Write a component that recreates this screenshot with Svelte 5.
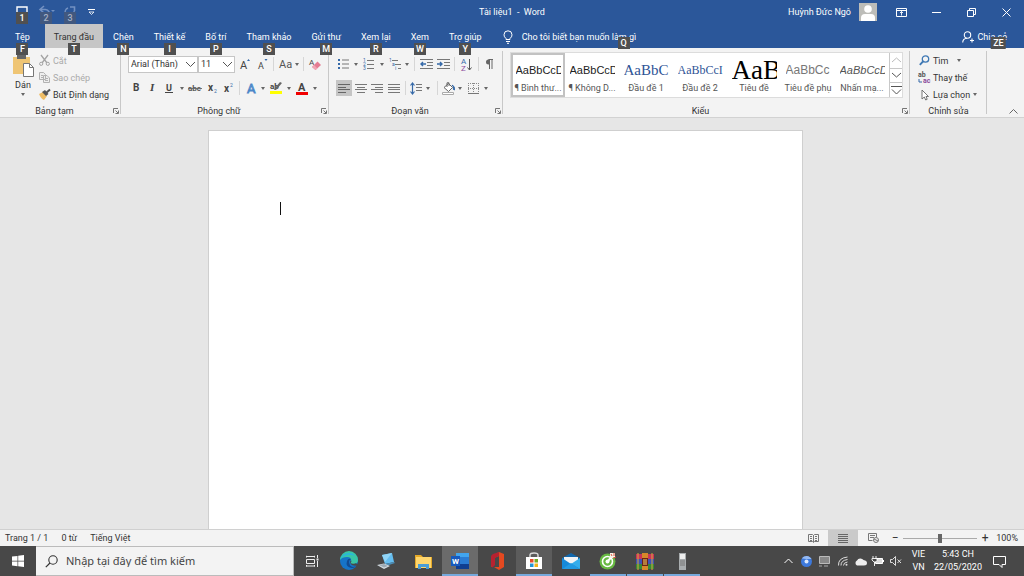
<script lang="ts">
	type Tab = { label: string; tip: string; active?: boolean };
	type Style = { sample: string; label: string; kind: string };
	type Tool = { icon?: string; label?: string; kind?: 'caret' | 'sep' | 'on' };

	let font = $state('Arial (Thân)');
	let size = $state('11');
	let zoom = $state(100);
	let query = $state('');

	const tabs: Tab[] = [
		{ label: 'Tệp', tip: 'F' },
		{ label: 'Trang đầu', tip: 'T', active: true },
		{ label: 'Chèn', tip: 'N' },
		{ label: 'Thiết kế', tip: 'I' },
		{ label: 'Bố trí', tip: 'P' },
		{ label: 'Tham khảo', tip: 'S' },
		{ label: 'Gửi thư', tip: 'M' },
		{ label: 'Xem lại', tip: 'R' },
		{ label: 'Xem', tip: 'W' },
		{ label: 'Trợ giúp', tip: 'Y' }
	];

	const styles: Style[] = [
		{ sample: 'AaBbCcD', label: '¶ Bình thư...', kind: 'body selected' },
		{ sample: 'AaBbCcD', label: '¶ Không D...', kind: 'body' },
		{ sample: 'AaBbC', label: 'Đầu đề 1', kind: 'heading' },
		{ sample: 'AaBbCcI', label: 'Đầu đề 2', kind: 'heading small' },
		{ sample: 'AaB', label: 'Tiêu đề', kind: 'title' },
		{ sample: 'AaBbCc', label: 'Tiêu đề phụ', kind: 'subtitle' },
		{ sample: 'AaBbCcD', label: 'Nhấn mạ...', kind: 'emphasis' }
	];

	const caret: Tool = { icon: 'caret', kind: 'caret', label: 'Tùy chọn' };
	const sep: Tool = { kind: 'sep' };

	const fontTools: Tool[] = [
		{ icon: 'bold', label: 'Đậm' },
		{ icon: 'italic', label: 'Nghiêng' },
		{ icon: 'underline', label: 'Gạch chân' },
		caret,
		{ icon: 'strike', label: 'Gạch ngang' },
		{ icon: 'sub', label: 'Chỉ số dưới' },
		{ icon: 'sup', label: 'Chỉ số trên' },
		sep,
		{ icon: 'effects', label: 'Hiệu ứng văn bản' },
		caret,
		{ icon: 'highlight', label: 'Màu tô sáng' },
		caret,
		{ icon: 'color', label: 'Màu phông' },
		caret
	];

	const listTools: Tool[] = [
		{ icon: 'bullets', label: 'Dấu đầu dòng' },
		caret,
		{ icon: 'numbers', label: 'Đánh số' },
		caret,
		{ icon: 'levels', label: 'Danh sách đa mức' },
		caret,
		sep,
		{ icon: 'outdent', label: 'Giảm thụt lề' },
		{ icon: 'indent', label: 'Tăng thụt lề' },
		sep,
		{ icon: 'sort', label: 'Sắp xếp' },
		sep,
		{ icon: 'pilcrow', label: 'Hiện dấu đoạn' }
	];

	const alignTools: Tool[] = [
		{ icon: 'left', label: 'Căn trái', kind: 'on' },
		{ icon: 'center', label: 'Căn giữa' },
		{ icon: 'right', label: 'Căn phải' },
		{ icon: 'justify', label: 'Căn đều' },
		sep,
		{ icon: 'spacing', label: 'Giãn cách dòng' },
		caret,
		sep,
		{ icon: 'bucket', label: 'Tô bóng' },
		caret,
		{ icon: 'borders', label: 'Viền' },
		caret
	];

	const apps = [
		{ icon: 'taskview', label: 'Dạng xem tác vụ', state: '' },
		{ icon: 'edge', label: 'Edge', state: '' },
		{ icon: 'laptop', label: 'PC', state: '' },
		{ icon: 'folder', label: 'File Explorer', state: '' },
		{ icon: 'word', label: 'Word', state: 'open focused' },
		{ icon: 'office', label: 'Office', state: '' },
		{ icon: 'store', label: 'Store', state: 'open hovered' },
		{ icon: 'mail', label: 'Thư', state: '' },
		{ icon: 'coccoc', label: 'Cốc Cốc', state: 'open' },
		{ icon: 'winrar', label: 'WinRAR', state: 'open' },
		{ icon: 'phone', label: 'Thiết bị', state: 'open' }
	];

	const tray = ['trayup', 'chrome', 'display', 'wifi', 'cloud', 'battery', 'mute'];

	// width, height, svg content
	const icons: Record<string, [number, number, string]> = {
		caret: [4, 3, '<path d="M0 0h4L2 3z" fill="#666"/>'],
		chevron: [11, 7, '<path d="M1 1l4.5 4.5L10 1" fill="none" stroke="#555"/>'],
		save: [12, 12, '<path d="M1 11V1h10v10" fill="none" stroke="#fff" stroke-width="1.4"/>'],
		undo: [14, 12, '<path d="M5 0L1 3.500l4 3.500M1 3.500h5a4 3.500 0 0 1 3 6" fill="none" stroke="#7391c2" stroke-width="1.6"/><path d="M12 4h4l-2 2z" fill="#7391c2"/>'],
		redo: [12, 12, '<path d="M10 5A4.500 4.500 0 1 1 4 2M6 1h4.500v4" fill="none" stroke="#7391c2" stroke-width="1.6"/>'],
		customize: [7, 6, '<path d="M0 .5h7" stroke="#fff"/><path d="M1 3h5L3.500 5.500z" fill="none" stroke="#fff" stroke-width=".8"/>'],
		avatar: [18, 18, '<path fill="#bdbdb9" d="M0 0h18v18H0z"/><circle cx="9" cy="6" r="3.800" fill="#fff"/><path d="M2 18v-3q0-4 4-4h6q4 0 4 4v3z" fill="#fff"/>'],
		ribbonopt: [11, 9, '<path d="M.5.5h10v8H.5zM.5 2.500h10" fill="none" stroke="#fff"/><path d="M5.500 7.500v-4M4 5l1.500-1.500L7 5" fill="none" stroke="#fff" stroke-width=".9"/>'],
		minimize: [9, 9, '<path d="M0 4.500h9" stroke="#fff"/>'],
		restore: [9, 9, '<path d="M.5 2.500h6v6h-6zM2.500 2.500v-2h6v6h-2" fill="none" stroke="#fff"/>'],
		close: [9, 9, '<path d="M.5.5l8 8M8.500.5l-8 8" stroke="#fff"/>'],
		bulb: [10, 14, '<path d="M3 9.500V8.500Q1 7 1 4.800a4 4 0 0 1 8 0Q9 7 7 8.500v1z" fill="none" stroke="#fff"/><path d="M3 11.500h4M4 13.300h2" stroke="#fff"/>'],
		share: [12, 12, '<circle cx="5.500" cy="4" r="3.200" fill="none" stroke="#fff" stroke-width="1.100"/><path d="M.7 11.500q.2-4 4.300-4.200M8 9.500h4M10 7.500v4" fill="none" stroke="#fff" stroke-width="1.100"/>'],
		paste: [22, 22, '<path d="M1 2h17v17H1z" fill="#efc574"/><path d="M5 0h9v4H5z" fill="#666"/><path d="M11.500 8.500h6l4 4v9h-10z" fill="#fff" stroke="#777"/><path d="M17.500 8.500v4h4" fill="none" stroke="#777"/>'],
		cut: [11, 11, '<path d="M2 0l6 8M9 0L3 8" stroke="#a5a5a5" stroke-width="1.300"/><circle cx="2.200" cy="8.800" r="1.600" fill="none" stroke="#a5a5a5"/><circle cx="8.800" cy="8.800" r="1.600" fill="none" stroke="#a5a5a5"/>'],
		copy: [11, 11, '<path d="M.5.5h4l2 2v5h-6zM4.500 3.500h3.500l2.500 2.500v4.500h-6z" fill="#eee" stroke="#b2b2b2"/><path d="M2 3.500h2M2 5.500h2M6 6.500h3M6 8.500h3" stroke="#b2b2b2"/>'],
		brush: [11, 11, '<path d="M0 5l4-2 4 4-3 4q-3-1-5-6z" fill="#efbd65"/><path d="M3 3l3-2L9.500 5 7 7z" fill="#555"/><path d="M7 4l4-3.500" stroke="#555" stroke-width="2"/>'],
		launcher: [6, 6, '<path d="M.5 5V.5H5M2.500 2.500L5 5M5.500 2.500v3h-3" fill="none" stroke="#666" stroke-width=".9"/>'],
		grow: [10, 12, '<text x="0" y="11" font-size="11" fill="#444">A</text><path d="M7 3l1.500-2L10 3z" fill="#3569a8"/>'],
		shrink: [10, 12, '<text x="0" y="11" font-size="9" fill="#444">A</text><path d="M6.500 1h3L8 3z" fill="#3569a8"/>'],
		case: [13, 12, '<text x="0" y="10" font-size="11" fill="#555">Aa</text>'],
		clear: [13, 13, '<text x="0" y="7" font-size="8" fill="#444">A</text><path d="M3 9l5.500-5.500L12 7l-5.500 5z" fill="#e57b92"/><path d="M3 9l2-2 3.500 3.500L6.500 12z" fill="#efa5b4"/>'],
		bold: [8, 12, '<text x="1" y="9" font-size="10" font-weight="700" fill="#444">B</text>'],
		italic: [8, 12, '<text x="2" y="9" font-size="11" font-style="italic" font-family="Liberation Serif" font-weight="700" fill="#444">I</text>'],
		underline: [8, 12, '<text x="1" y="9" font-size="9" font-weight="700" fill="#444">U</text><path d="M0 10.500h8" stroke="#444"/>'],
		strike: [14, 12, '<text x="0" y="9" font-size="8" font-weight="700" fill="#555">abc</text><path d="M0 6.500h14" stroke="#666" stroke-width=".9"/>'],
		sub: [11, 12, '<text x="1" y="9" font-size="10" font-weight="700" fill="#444">x</text><text x="7" y="11" font-size="5" fill="#3569a8">2</text>'],
		sup: [11, 12, '<text x="1" y="10" font-size="10" font-weight="700" fill="#444">x</text><text x="7" y="5" font-size="5" fill="#3569a8">2</text>'],
		effects: [11, 12, '<text x="1" y="11" font-size="13" fill="#fff" stroke="#4b86c8" stroke-width=".9">A</text>'],
		highlight: [13, 13, '<text x="0" y="7" font-size="8" font-weight="700" fill="#444">ab</text><path d="M12 1L6 8H4l1-2 5-6z" fill="#666"/><path d="M0 9h12v3H0z" fill="#ffff00"/>'],
		color: [12, 13, '<text x="2" y="9" font-size="11" font-weight="700" fill="#444">A</text><path d="M0 10h12v3H0z" fill="#f00000"/>'],
		bullets: [12, 12, '<path d="M0 1h2v2H0zM0 5h2v2H0zM0 9h2v2H0z" fill="#3569a8"/><path d="M4 2h7M4 6h7M4 10h7" stroke="#777"/>'],
		numbers: [12, 13, '<g font-size="5" fill="#3569a8"><text x="0" y="4">1</text><text x="0" y="8">2</text><text x="0" y="12">3</text></g><path d="M4 2.500h7M4 6.500h7M4 10.500h7" stroke="#777"/>'],
		levels: [13, 13, '<g font-size="5" fill="#3569a8"><text x="0" y="4">1</text><text x="3" y="8">a</text><text x="6" y="12">i</text></g><path d="M3 2.500h6M6 6.500h6M9 10.500h3" stroke="#777"/>'],
		outdent: [13, 11, '<path d="M0 .5h13M7 3.500h6M7 6.500h6M0 9.500h13" stroke="#777"/><path d="M6 5H1M3 3L1 5l2 2" fill="none" stroke="#3569a8" stroke-width="1.400"/>'],
		indent: [13, 11, '<path d="M0 .5h13M7 3.500h6M7 6.500h6M0 9.500h13" stroke="#777"/><path d="M0 5h5M3 3l2 2-2 2" fill="none" stroke="#3569a8" stroke-width="1.400"/>'],
		sort: [11, 13, '<text x="0" y="6" font-size="8" fill="#3569a8">A</text><text x="0" y="13" font-size="8" fill="#8b4b9c">Z</text><path d="M8.500 1v11M6.500 9.500l2 2.500 2-2.500" fill="none" stroke="#555"/>'],
		pilcrow: [9, 12, '<path d="M4 1.500H3.500a2.500 2.500 0 0 0 0 5H4z" fill="#666"/><path d="M8 1.500H3.500M4.500 1v10M7 1v10" fill="none" stroke="#666"/>'],
		left: [12, 9, '<path d="M0 .5h12M0 3.500h8M0 5.500h12M0 8.500h8" stroke="#666"/>'],
		center: [12, 9, '<path d="M0 .5h12M2 3.500h8M0 5.500h12M2 8.500h8" stroke="#777"/>'],
		right: [12, 9, '<path d="M0 .5h12M4 3.500h8M0 5.500h12M4 8.500h8" stroke="#777"/>'],
		justify: [12, 9, '<path d="M0 .5h12M0 3.500h12M0 5.500h12M0 8.500h12" stroke="#777"/>'],
		spacing: [12, 13, '<path d="M2.500 1v11M.5 3.500l2-2.500 2 2.500M.5 9.500l2 2.500 2-2.500" fill="none" stroke="#3569a8" stroke-width="1.200"/><path d="M6 2.500h6M6 5.500h6M6 8.500h6" stroke="#777"/>'],
		bucket: [14, 13, '<path d="M2 5.500L6.500 1.500l4 4-4 4z" fill="#fff" stroke="#666"/><path d="M5 5V.8h2V4" fill="none" stroke="#666"/><path d="M10 3q3 1 2.500 5-2 0-1-3z" fill="#3569a8" stroke="#3569a8"/><path d="M.5 10.500h11v2H.5z" fill="#fff" stroke="#aaa"/>'],
		borders: [11, 11, '<path d="M.5 0v11M5.500 0v11M10.500 0v11M0 .5h11M0 5.500h11" stroke="#888" stroke-dasharray="1 1"/><path d="M0 10.500h11" stroke="#777"/>'],
		find: [11, 11, '<circle cx="6.500" cy="4" r="3.200" fill="none" stroke="#3e78b4" stroke-width="1.300"/><path d="M4 6.500L.8 9.800" stroke="#3e78b4" stroke-width="1.800"/>'],
		replace: [11, 12, '<text x="-1" y="5" font-size="7" font-weight="700" fill="#555">ab</text><text x="4" y="11" font-size="7" font-weight="700" fill="#8b4b9c">ac</text><path d="M0 7v3h3" fill="none" stroke="#3569a8"/>'],
		pointer: [11, 12, '<path d="M3 1v9l2.300-2 1.400 3 1.500-.7L7 7.500h2.500z" fill="#fff" stroke="#666" stroke-width=".9"/>'],
		collapse: [9, 5, '<path d="M.5 4.500l4-4 4 4" fill="none" stroke="#666"/>'],
		scrollup: [11, 6, '<path d="M1 5l4.500-4L10 5" fill="none" stroke="#bbb"/>'],
		scrolldown: [11, 6, '<path d="M1 1l4.500 4L10 1" fill="none" stroke="#555"/>'],
		scrollmore: [11, 9, '<path d="M0 .5h11M1 3.500l4.500 4.500L10 3.500" fill="none" stroke="#555"/>'],
		readmode: [11, 9, '<path d="M.5.5h4l1 1 1-1h4v7h-4l-1 1-1-1h-4zM5.500 1v7M2 2.500h2M2 4.500h2M2 6.500h2M7 2.500h2M7 4.500h2M7 6.500h2" fill="none" stroke="#777"/>'],
		printview: [10, 9, '<path d="M0 .5h10M0 2.500h10M0 4.500h10M0 6.500h10M0 8.500h10" stroke="#666"/>'],
		webview: [11, 10, '<path d="M8.500 4V.5h-8v7h4M2 2.500h5M2 4.500h4" fill="none" stroke="#777"/><circle cx="8" cy="7" r="2.500" fill="#eee" stroke="#777"/><path d="M6 6l4 2" stroke="#777"/>'],
		windows: [12, 12, '<path d="M0 1.600L5.500.9v4.800H0zM6.200.8L12 0v5.700H6.200zM0 6.400h5.500v4.800L0 10.400zM6.200 6.400H12V12l-5.800-.8z" fill="#fff"/>'],
		search: [13, 13, '<circle cx="8" cy="5" r="4.200" fill="none" stroke="#333" stroke-width="1.100"/><path d="M5 8L.8 12.200" stroke="#333" stroke-width="1.200"/>'],
		taskview: [13, 12, '<path d="M.5 2.500V.8M.5 1.500h8M8.500.8v1.700M.5 4.500h8v4h-8zM.5 10v1.700M.5 11h8M8.500 10v1.700M11.500 0v3M11.500 6v6" fill="none" stroke="#eee"/><path d="M10.500 3.500h2v2h-2z" fill="#eee"/>'],
		edge: [18, 18, '<circle cx="9" cy="9" r="9" fill="#1674c8"/><path d="M0 8A9 9 0 0 1 18 8q0 4-4.500 4-4 0-2.500-2Q12 5 7 5 2 5 0 8z" fill="#39c6a6"/><path d="M0 8Q2 1 9 1q4 0 6 3-4-2-8-1-5 1-7 5z" fill="#28b5df"/><path d="M7 9q-2 6 5 7 3 0 4-2-6 3-7-4 0-2 2-3-3-1-4 2z" fill="#124b91"/><path d="M11 8q1 2-.5 3 2 1.500 5 .3l2.500 1-1 1.500q-6 .5-7-3.500z" fill="#484848"/>'],
		laptop: [18, 16, '<path d="M5 2l10-2 2 9-9 2z" fill="#64bdf0"/><path d="M5 2l10-2-7 9z" fill="#91d5f7"/><path d="M8 11l9-2 1 1-9 3z" fill="#4b8fba"/><path d="M0 12l7-1.500 6 2.500-6 3z" fill="#d4dce1"/><path d="M2 12l5-1 4 2-4 1.500z" fill="#9ca9b3"/>'],
		folder: [17, 15, '<path d="M0 1h6l2 2h9v11H0z" fill="#e5a928"/><path d="M1 3h15v11H1z" fill="#ffd66d"/><path d="M3 15v-5h11v5h-3v-2H6v2z" fill="#4b9dd6"/>'],
		word: [18, 16, '<path d="M5 0h12q1 0 1 1v14q0 1-1 1H5z" fill="#2b7cd3"/><path d="M5 0h13v4H5z" fill="#41a5ee"/><path d="M5 11h13v5H5z" fill="#103f91"/><path d="M0 3h9v10H0z" fill="#185abd"/><text x="1" y="11" font-size="8" font-weight="700" fill="#fff">W</text>'],
		office: [15, 18, '<path d="M9 0l5 2v13l-5 3-5-3 5 0V4L5 5.500V12l-4 3V5z" fill="#e44920"/><path d="M9 0L3 2Q1 3 1 5v8q0 2 1.500 2.500L5 13V6l4-2z" fill="#b72230"/>'],
		store: [18, 18, '<path d="M5 5V3q0-2 4-2t4 2v2" fill="none" stroke="#ddd" stroke-width="1.400"/><path d="M1 5h16v12H1z" fill="#fff"/><path d="M5 7h3.500v3.500H5z" fill="#e64b2a"/><path d="M9.500 7H13v3.500H9.500z" fill="#72ab25"/><path d="M5 11.500h3.500V15H5z" fill="#2195d4"/><path d="M9.500 11.500H13V15H9.500z" fill="#f4b41a"/>'],
		mail: [18, 16, '<path d="M0 5l9-5 9 5v11H0z" fill="#1268ad"/><path d="M2 4h14v7H2z" fill="#f1f3f5"/><path d="M0 5l9 6-9 5z" fill="#1689d8"/><path d="M18 5l-9 6 9 5z" fill="#35adeb"/><path d="M0 16l9-6 9 6z" fill="#2299e2"/>'],
		coccoc: [18, 18, '<circle cx="8.500" cy="9.500" r="8" fill="#68b943"/><circle cx="8.500" cy="9.500" r="5" fill="none" stroke="#fff" stroke-width="1.600"/><circle cx="8.500" cy="9.500" r="2" fill="#fff"/><path d="M9 9l6-7" stroke="#fff" stroke-width="2"/><path d="M11 1h5v5h-5z" fill="#f4f4e8"/><path d="M12 2l1 2M15 1v3M14 6l3-1" stroke="#dd513f"/>'],
		winrar: [18, 17, '<path d="M0 1h18v5H0z" fill="#c93558"/><path d="M0 6h18v5H0z" fill="#3e52b5"/><path d="M0 11h18v5H0z" fill="#378a37"/><path d="M2 0v17M16 0v17" stroke="#d7aa3e"/><path d="M6 0h6v17H6z" fill="#d68829"/><path d="M6 5h6v8H6z" fill="#6b2418"/><path d="M7 7h4M7 9h4M7 11h4" stroke="#ffd763"/>'],
		phone: [9, 17, '<path d="M1 0h7v17H1z" fill="#a9adaf"/><path d="M2 1h5v5H2z" fill="#eee"/><path d="M2 8h5M2 10h5M2 12h5" stroke="#777"/>'],
		trayup: [9, 6, '<path d="M.5 5l4-4 4 4" fill="none" stroke="#fff"/>'],
		chrome: [11, 11, '<circle cx="5.500" cy="5.500" r="5.500" fill="#3d79dc"/><path d="M1 2.500A5.500 5.500 0 0 1 10.500 3h-5z" fill="#96baf2"/><circle cx="5.500" cy="5.500" r="2" fill="#dce9fb"/>'],
		display: [12, 11, '<path d="M1.500.5h10v7h-10z" fill="#888" stroke="#bbb"/><path d="M1 10h3M6 10h4" stroke="#aaa"/>'],
		wifi: [11, 10, '<path d="M1.500 9.500Q1 2 10.500 1M4 9.500Q3.800 4.500 10.500 3.500M6.500 9.500q0-3 4-3.500" fill="none" stroke="#ddd"/><circle cx="9.500" cy="8.800" r="1" fill="#ddd"/>'],
		cloud: [13, 9, '<path d="M3 8.500a2.800 2.800 0 0 1 0-5A3.800 3.800 0 0 1 9.500 3q3.500.5 3.500 3t-3 2.500z" fill="#eee"/>'],
		battery: [12, 10, '<path d="M3.500 2.500h7v5h-7z" fill="#ddd" stroke="#fff"/><path d="M11 4h1v2h-1z" fill="#fff"/><path d="M1 0v2M4 0v2M0 2.500h5v2L3.500 6H2L0 4zM2.500 6v4" fill="#484848" stroke="#fff" stroke-width=".9"/>'],
		mute: [12, 10, '<path d="M.5 3.500h2l3-3v9l-3-3h-2zM7.500 3.500l3.500 3.500M11 3.500L7.500 7" fill="none" stroke="#eee" stroke-width=".9"/>'],
		notice: [13, 13, '<path d="M.5 1.500h12v8H9v3L6 9.500H.5z" fill="none" stroke="#fff"/>']
	};
</script>

{#snippet icon(name: string)}
	{@const [w, h, body] = icons[name]}
	<svg class="icon" width={w} height={h} viewBox="0 0 {w} {h}" aria-hidden="true">{@html body}</svg>
{/snippet}

{#snippet tool(t: Tool)}
	{#if t.kind === 'sep'}
		<span class="sep"></span>
	{:else}
		<button class="tool" class:on={t.kind === 'on'} type="button" aria-label={t.label}>
			{@render icon(t.icon ?? '')}
		</button>
	{/if}
{/snippet}

{#snippet caption(text: string, launcher: boolean)}
	<div class="caption" class:has-launcher={launcher}>
		<span>{text}</span>
		{#if launcher}
			<button class="launcher" type="button" aria-label="Cài đặt {text}">{@render icon('launcher')}</button>
		{/if}
	</div>
{/snippet}

<div class="app">
	<header class="titlebar">
		<div class="quick">
			<button type="button" aria-label="Lưu">{@render icon('save')}<span class="tip">1</span></button>
			<button type="button" aria-label="Hoàn tác">
				{@render icon('undo')}<span class="tip faded">2</span>
			</button>
			<button type="button" aria-label="Làm lại">
				{@render icon('redo')}<span class="tip faded">3</span>
			</button>
			<button class="narrow" type="button" aria-label="Tùy chỉnh">{@render icon('customize')}</button>
		</div>
		<div class="doc-title">Tài liệu1&nbsp; -&nbsp; Word</div>
		<div class="window-tools">
			<button class="user" type="button">Huỳnh Đức Ngô {@render icon('avatar')}</button>
			<button class="win" type="button" aria-label="Tùy chọn dải băng">{@render icon('ribbonopt')}</button>
			<button class="win" type="button" aria-label="Thu nhỏ">{@render icon('minimize')}</button>
			<button class="win" type="button" aria-label="Khôi phục">{@render icon('restore')}</button>
			<button class="win" type="button" aria-label="Đóng">{@render icon('close')}</button>
		</div>
	</header>

	<nav class="tabs">
		{#each tabs as tab}
			<button class="tab" class:active={tab.active} type="button">
				{tab.label}<span class="tip">{tab.tip}</span>
			</button>
		{/each}
		<button class="tell" type="button">
			{@render icon('bulb')}
			<span>Cho tôi biết bạn muốn làm gì</span>
			<span class="tip">Q</span>
		</button>
		<button class="share" type="button">
			{@render icon('share')} Chia sẻ<span class="tip">ZE</span>
		</button>
	</nav>

	<section class="ribbon">
		<div class="group">
			<div class="clipboard">
				<button class="paste" type="button">
					{@render icon('paste')}<span>Dán</span>{@render icon('caret')}
				</button>
				<div class="stack">
					<button type="button" disabled>{@render icon('cut')} Cắt</button>
					<button type="button" disabled>{@render icon('copy')} Sao chép</button>
					<button type="button">{@render icon('brush')} Bút Định dạng</button>
				</div>
			</div>
			{@render caption('Bảng tạm', true)}
		</div>

		<div class="group">
			<div class="row font-row">
				<label class="combo">
					<select bind:value={font} aria-label="Phông"><option>Arial (Thân)</option></select>
					{@render icon('chevron')}
				</label>
				<label class="combo">
					<select bind:value={size} aria-label="Cỡ phông"><option>11</option></select>
					{@render icon('chevron')}
				</label>
				{@render tool({ icon: 'grow', label: 'Tăng cỡ phông' })}
				{@render tool({ icon: 'shrink', label: 'Giảm cỡ phông' })}
				{@render tool(sep)}
				{@render tool({ icon: 'case', label: 'Đổi kiểu chữ' })}
				{@render tool(caret)}
				{@render tool(sep)}
				{@render tool({ icon: 'clear', label: 'Xóa định dạng' })}
			</div>
			<div class="row format-row">
				{#each fontTools as t}{@render tool(t)}{/each}
			</div>
			{@render caption('Phông chữ', true)}
		</div>

		<div class="group">
			<div class="row list-row">
				{#each listTools as t}{@render tool(t)}{/each}
			</div>
			<div class="row align-row">
				{#each alignTools as t}{@render tool(t)}{/each}
			</div>
			{@render caption('Đoạn văn', true)}
		</div>

		<div class="group">
			<div class="gallery">
				{#each styles as s}
					<button class="style {s.kind}" type="button">
						<span class="sample">{s.sample}</span>
						<span class="style-name">{s.label}</span>
					</button>
				{/each}
				<div class="scroller">
					<button type="button" aria-label="Lên">{@render icon('scrollup')}</button>
					<button type="button" aria-label="Xuống">{@render icon('scrolldown')}</button>
					<button type="button" aria-label="Thêm">{@render icon('scrollmore')}</button>
				</div>
			</div>
			{@render caption('Kiểu', true)}
		</div>

		<div class="group">
			<div class="stack editing">
				<button type="button">{@render icon('find')} Tìm <span class="gap"></span>{@render icon('caret')}</button>
				<button type="button">{@render icon('replace')} Thay thế</button>
				<button type="button">{@render icon('pointer')} Lựa chọn{@render icon('caret')}</button>
			</div>
			{@render caption('Chỉnh sửa', false)}
		</div>

		<button class="collapse" type="button" aria-label="Thu gọn dải băng">{@render icon('collapse')}</button>
	</section>

	<main class="workspace">
		<article class="page"><span class="text-caret"></span></article>
	</main>

	<footer class="status">
		<span>Trang 1 / 1</span>
		<span>0 từ</span>
		<span>Tiếng Việt</span>
		<div class="views">
			<button type="button" aria-label="Chế độ đọc">{@render icon('readmode')}</button>
			<button class="current" type="button" aria-label="Bố trí in">{@render icon('printview')}</button>
			<button type="button" aria-label="Bố trí web">{@render icon('webview')}</button>
		</div>
		<div class="zoom">
			<button type="button" aria-label="Thu nhỏ">−</button>
			<input type="range" min="0" max="200" bind:value={zoom} aria-label="Thu phóng" />
			<button type="button" aria-label="Phóng to">+</button>
			<span class="percent">{zoom}%</span>
		</div>
	</footer>

	<div class="taskbar">
		<button class="start" type="button" aria-label="Bắt đầu">{@render icon('windows')}</button>
		<label class="search">
			{@render icon('search')}
			<input type="text" placeholder="Nhập tại đây để tìm kiếm" aria-label="Tìm kiếm" bind:value={query} />
		</label>
		<div class="apps">
			{#each apps as app}
				<button class="app-button {app.state}" type="button" aria-label={app.label}>
					{@render icon(app.icon)}
				</button>
			{/each}
		</div>
		<div class="tray">
			{#each tray as name}
				<button type="button" aria-label={name}>{@render icon(name)}</button>
			{/each}
		</div>
		<div class="language">VIE<br />VN</div>
		<div class="clock">5:43 CH<br />22/05/2020</div>
		<button class="notice" type="button" aria-label="Thông báo">{@render icon('notice')}</button>
	</div>
</div>

<style>
	:global(body) {
		background: #e6e6e6;
	}

	.app,
	.app * {
		box-sizing: border-box;
	}

	.app {
		display: flex;
		flex-direction: column;
		min-height: 100vh;
		font-family: Roboto, 'Noto Sans', sans-serif;
		font-size: 9px;
		line-height: 12px;
		color: #333;
	}

	button,
	select,
	input {
		margin: 0;
		padding: 0;
		border: 0;
		border-radius: 0;
		background: transparent;
		color: inherit;
		font: inherit;
	}

	button {
		display: flex;
		align-items: center;
		justify-content: center;
		white-space: nowrap;
	}

	.icon {
		display: block;
		flex: none;
		overflow: visible;
	}

	.titlebar {
		display: grid;
		grid-template-columns: 1fr auto 1fr;
		align-items: center;
		height: 24px;
		background: #2b579a;
		color: #fff;
	}

	.quick {
		display: flex;
		padding-left: 10px;
	}

	.quick button {
		position: relative;
		width: 24px;
		height: 24px;
	}

	.quick .narrow {
		width: 18px;
	}

	.tip {
		position: absolute;
		bottom: -7px;
		left: 50%;
		z-index: 1;
		min-width: 12px;
		height: 12px;
		padding: 0 2px;
		transform: translateX(-50%);
		background: #505050;
		color: #fff;
		font-size: 9px;
		font-weight: 500;
		line-height: 12px;
		text-align: center;
	}

	.quick .tip {
		bottom: 0;
	}

	.tip.faded {
		background: #41587f;
		color: #a5b0c4;
	}

	.window-tools {
		display: flex;
		justify-content: flex-end;
		align-items: center;
	}

	.user {
		gap: 8px;
		margin-right: 7px;
	}

	.win {
		width: 35px;
		height: 24px;
	}

	.tabs {
		display: flex;
		height: 24px;
		background: #2b579a;
		color: #fff;
	}

	.tab {
		position: relative;
		padding: 2px 10px 0;
	}

	.tab:first-child {
		padding: 2px 15px 0;
	}

	.tab.active {
		padding: 2px 9px 0;
		background: #c6c6c6;
		color: #333;
	}

	.tell,
	.share {
		position: relative;
		gap: 9px;
		margin-left: 11px;
		padding-top: 2px;
	}

	.tell .tip {
		bottom: -1px;
		left: 121px;
	}

	.share {
		gap: 3px;
		margin-left: auto;
		margin-right: 17px;
	}

	.share .tip {
		bottom: -1px;
		left: 36px;
	}

	.ribbon {
		display: grid;
		grid-template-columns: 121px 208px 174px minmax(0, 1fr) 77px 37px;
		height: 70px;
		border-bottom: 1px solid #d2d2d2;
		background: #f3f3f3;
	}

	.group {
		position: relative;
		display: flex;
		flex-direction: column;
		min-width: 0;
		padding: 4px 7px 0;
	}

	.group::after {
		content: '';
		position: absolute;
		top: 3px;
		right: 0;
		bottom: 3px;
		width: 1px;
		background: #c8c8c8;
	}

	.caption {
		display: flex;
		justify-content: center;
		position: relative;
		height: 12px;
		margin-top: auto;
	}

	.has-launcher {
		padding-right: 12px;
	}

	.launcher {
		position: absolute;
		top: 3px;
		right: -5px;
	}

	.clipboard {
		display: flex;
		height: 52px;
	}

	.paste {
		flex-direction: column;
		gap: 2px;
		justify-content: flex-start;
		width: 32px;
		padding-top: 3px;
	}

	.stack {
		display: grid;
		grid-template-rows: repeat(3, 17px);
	}

	.stack button {
		justify-content: flex-start;
		gap: 3px;
	}

	.stack button:disabled {
		color: #aaa;
	}

	.row {
		display: grid;
		align-items: center;
		height: 24px;
	}

	.font-row {
		grid-template-columns: 70px 37px 20px 16px 4px 20px 4px 8px 16px;
	}

	.format-row {
		grid-template-columns: 16px 16px 18px 8px 18px 16px 16px 6px 18px 6px 20px 6px 20px 6px;
	}

	.list-row {
		grid-template-columns: 16px 8px 18px 8px 18px 6px 8px 16px 18px 4px 20px 4px 18px;
	}

	.align-row {
		grid-template-columns: 16px 17px 16px 17px 6px 16px 8px 10px 14px 8px 18px 8px;
	}

	.tool {
		height: 16px;
	}

	.tool.on {
		background: #c5c5c5;
	}

	.sep {
		justify-self: center;
		width: 1px;
		height: 14px;
		background: #d6d6d6;
	}

	.combo {
		display: flex;
		align-items: center;
		position: relative;
		height: 17px;
		border: 1px solid #c6c6c6;
		background: #fff;
	}

	.combo select {
		width: 100%;
		padding-left: 2px;
		appearance: none;
	}

	.combo .icon {
		position: absolute;
		right: 1px;
		pointer-events: none;
	}

	.gallery {
		display: grid;
		grid-template-columns: repeat(7, minmax(0, 1fr)) 13px;
		height: 46px;
		border: 1px solid #dcdcdc;
		background: #fff;
	}

	.style {
		flex-direction: column;
		justify-content: flex-end;
		min-width: 0;
		padding: 0 2px 1px;
		border: 2px solid transparent;
	}

	.style.selected {
		border-color: #c2c2c2;
	}

	.sample {
		display: flex;
		align-items: center;
		width: 45px;
		height: 24px;
		overflow: hidden;
		font-family: 'Liberation Sans', sans-serif;
		font-size: 11px;
		color: #222;
	}

	.heading .sample,
	.title .sample {
		font-family: 'Liberation Serif', serif;
		font-size: 15px;
		color: #2f5496;
	}

	.heading.small .sample {
		font-size: 12px;
	}

	.title .sample {
		font-size: 27px;
		color: #000;
	}

	.subtitle .sample {
		font-size: 12px;
		color: #777;
	}

	.emphasis .sample {
		font-style: italic;
		color: #555;
	}

	.style-name {
		color: #555;
	}

	.scroller {
		display: grid;
		grid-template-rows: repeat(3, 1fr);
		border-left: 1px solid #c8c8c8;
	}

	.scroller button + button {
		border-top: 1px solid #c8c8c8;
	}

	.editing {
		padding-left: 2px;
	}

	.gap {
		width: 2px;
	}

	.collapse {
		align-self: end;
		padding: 3px;
		justify-self: center;
		margin-left: 16px;
	}

	.workspace {
		display: flex;
		justify-content: center;
		flex: 1;
		padding: 12px 14px 0 0;
		background: #e6e6e6;
	}

	.page {
		width: 100%;
		max-width: 595px;
		padding: 71px;
		border: 1px solid #cfcfcf;
		border-bottom: 0;
		background: #fff;
	}

	.text-caret {
		display: block;
		width: 1px;
		height: 13px;
		background: #111;
	}

	.status {
		display: flex;
		align-items: center;
		gap: 13px;
		height: 17px;
		padding: 0 6px 0 5px;
		border-top: 1px solid #d0d0d0;
		background: #f3f3f3;
	}

	.views {
		display: flex;
		margin-left: auto;
	}

	.views button {
		width: 30px;
		height: 16px;
	}

	.views .current {
		background: #cacaca;
	}

	.zoom {
		display: flex;
		align-items: center;
		gap: 4px;
		margin-left: -10px;
	}

	.zoom button {
		width: 8px;
		font-size: 12px;
	}

	.zoom input {
		width: 74px;
		height: 12px;
		appearance: none;
		background: linear-gradient(#aaa, #aaa) center / 100% 1px no-repeat;
	}

	.zoom input::-webkit-slider-thumb {
		appearance: none;
		width: 4px;
		height: 9px;
		background: #666;
	}

	.percent {
		margin-left: 3px;
	}

	.taskbar {
		display: flex;
		height: 30px;
		background: #484848;
		color: #fff;
	}

	.start {
		width: 36px;
	}

	.search {
		display: flex;
		align-items: center;
		gap: 8px;
		width: 258px;
		padding: 0 9px;
		border: 1px solid #bbb;
		border-left: 0;
		background: #f3f3f3;
		color: #333;
		font-family: 'Noto Sans', sans-serif;
		font-size: 11px;
	}

	.search input {
		flex: 1;
		min-width: 0;
	}

	.search input::placeholder {
		color: #444;
		opacity: 1;
	}

	.apps {
		display: flex;
		gap: 1px;
	}

	.app-button {
		width: 36px;
	}

	.open {
		border-bottom: 2px solid #76a9dc;
		padding-top: 2px;
	}

	.focused {
		background: #6b6b6b;
	}

	.hovered {
		background: #5c5c5c;
	}

	.tray {
		display: flex;
		margin-left: auto;
	}

	.tray button {
		width: 18px;
	}

	.language,
	.clock {
		align-self: center;
		width: 27px;
		line-height: 13px;
		text-align: center;
	}

	.clock {
		width: 52px;
	}

	.notice {
		width: 30px;
		margin-right: 10px;
	}
</style>
